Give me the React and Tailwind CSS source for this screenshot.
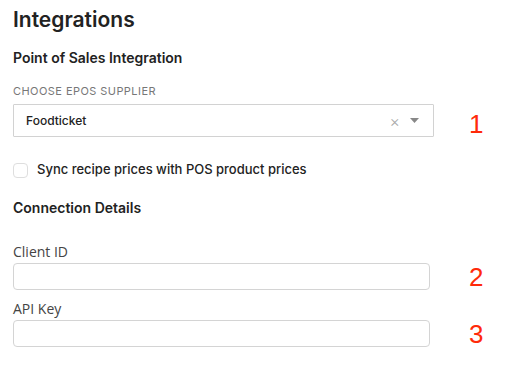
import React from 'react';

const Marker = ({ n, className = '' }) => (
    <span
        className={`w-[14px] ml-[35px] text-[26px] leading-none text-[#ff2a0a] ${className}`}
        style={{ fontFamily: '"Liberation Sans", Arial, sans-serif' }}
    >
        {n}
    </span>
);

const TextField = ({ label, n }) => (
    <div className="flex flex-col">
        <label className="text-[14px] leading-[20px] text-[#444]" style={{ fontFamily: '"Open Sans", sans-serif' }}>
            {label}
        </label>
        <div className="flex items-center">
            <input
                type="text"
                className="w-[417px] h-[27px] border border-[#d4d4d4] rounded-[4px] bg-white outline-none"
            />
            <Marker n={n} className="ml-[39px] pt-[2px]" />
        </div>
    </div>
);

export default function App() {
    return (
        <div className="min-h-screen bg-white text-[#222] px-[13px] pt-[7px]" style={{ fontFamily: 'Inter, sans-serif' }}>
            <h1 className="text-[21px] leading-[25px] font-semibold">Integrations</h1>

            {/* POS block */}
            <h2 className="mt-[16px] text-[14px] leading-[20px] font-semibold">Point of Sales Integration</h2>
            <div className="mt-[15px] text-[11px] leading-[16px] tracking-[0.04em] text-[#777] uppercase">
                Choose EPOS supplier
            </div>
            <div className="flex items-center mt-[5px]">
                <div className="w-[421px] h-[33px] border border-[#d2d2d2] rounded-[1px] flex items-center pl-[12px] pr-[14px]">
                    <span className="flex-1 text-[12px] font-medium text-[#222]">Foodticket</span>
                    <span className="text-[#aaa] text-[16px] font-light leading-none mr-[10px]">×</span>
                    <svg width="9" height="5" viewBox="0 0 9 5">
                        <path d="M0 0h9L4.5 5z" fill="#888" />
                    </svg>
                </div>
                <Marker n="1" className="pt-[6px]" />
            </div>

            <label className="flex items-center gap-[9px] mt-[23px] h-[20px]">
                <span className="w-[15px] h-[15px] border border-[#dedede] rounded-[4px] bg-white" />
                <span className="text-[13px] font-medium text-[#222]">Sync recipe prices with POS product prices</span>
            </label>

            {/* connection */}
            <h2 className="mt-[18px] text-[14px] leading-[20px] font-semibold">Connection Details</h2>
            <div className="mt-[24px] flex flex-col gap-[9px]">
                <TextField label="Client ID" n="2" />
                <TextField label="API Key" n="3" />
            </div>
        </div>
    );
}
